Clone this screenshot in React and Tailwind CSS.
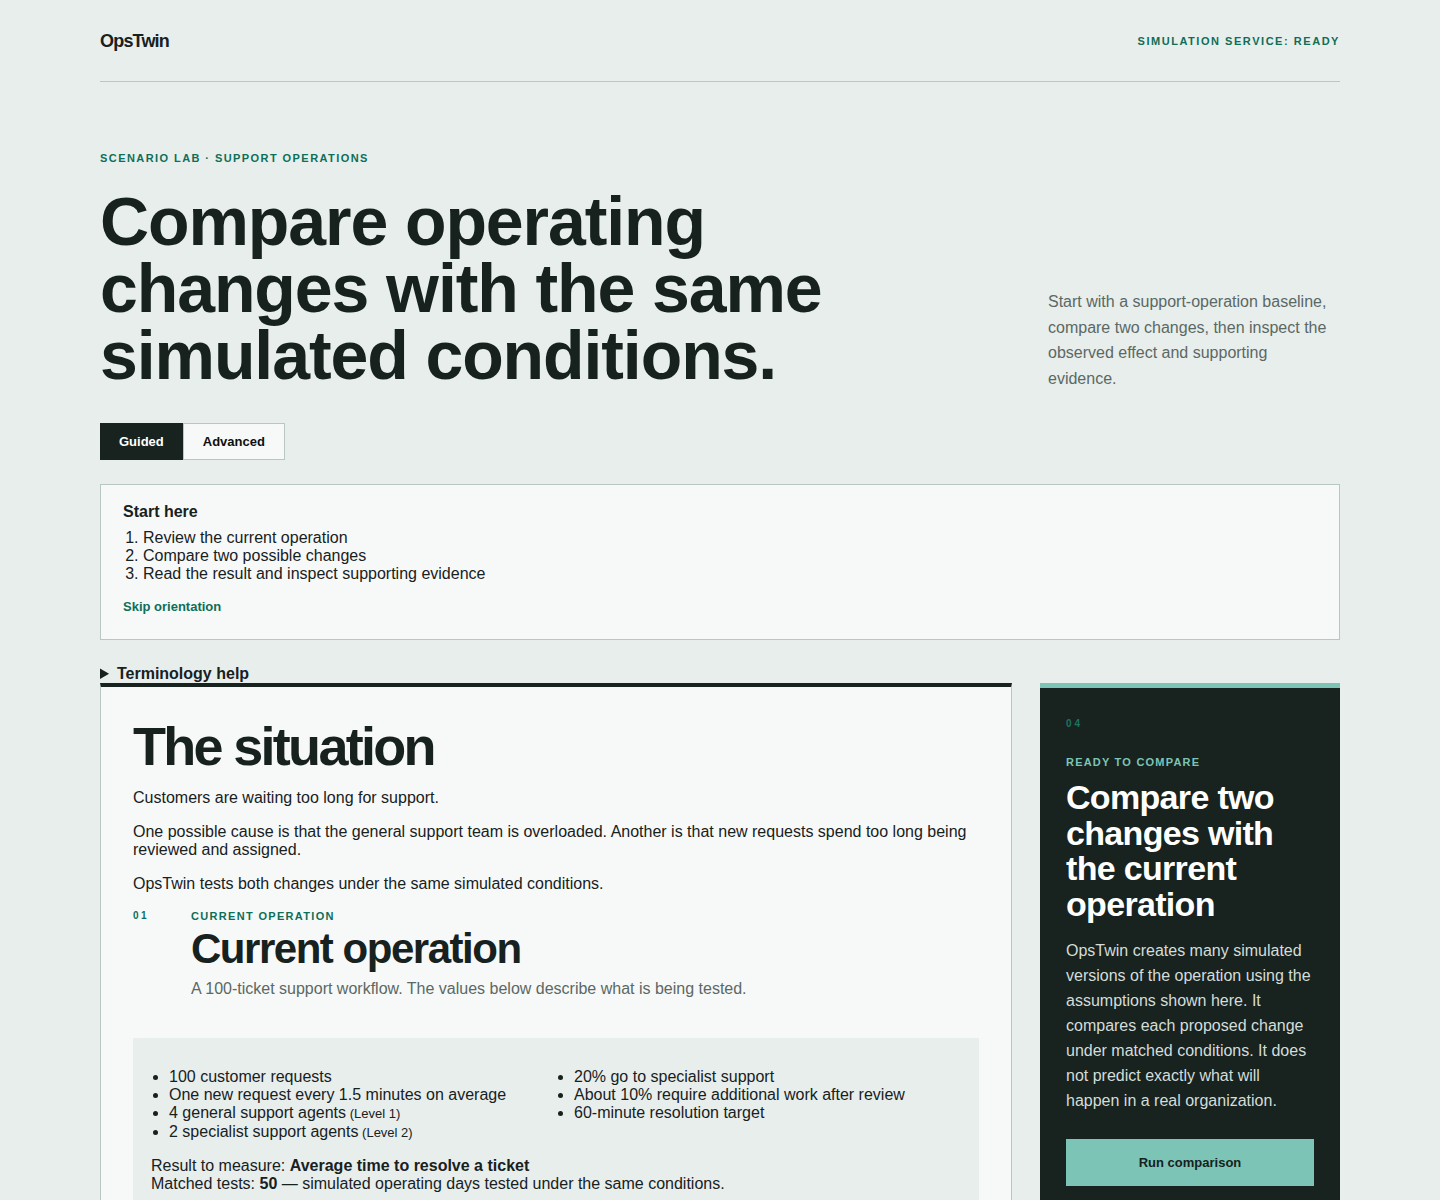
import React from "react";

const font = { fontFamily: '"Liberation Sans", Arial, sans-serif' };

const baseline = [
    { text: "100 customer requests" },
    { text: "One new request every 1.5 minutes on average" },
    { text: "4 general support agents", note: "(Level 1)" },
    { text: "2 specialist support agents", note: "(Level 2)" },
];

const routing = [
    { text: "20% go to specialist support" },
    { text: "About 10% require additional work after review" },
    { text: "60-minute resolution target" },
];

const FactList = ({ items }) => (
    <ul className="list-disc pl-[18px] text-[16px] leading-[18px] text-[#17211e]">
        {items.map((item) => (
            <li key={item.text}>
                {item.text}
                {item.note && <span className="text-[13px]"> {item.note}</span>}
            </li>
        ))}
    </ul>
);

const App = () => {
    return (
        <div className="min-h-screen bg-[#e8eeec] text-[#17211e]" style={font}>
            <div className="max-w-[1240px] mx-auto">
                {/* top bar */}
                <header className="h-[82px] pt-[2px] flex items-center justify-between border-b border-[#bcc6c3]">
                    <span className="text-[18px] font-bold tracking-[-0.045em]">OpsTwin</span>
                    <span className="text-[11px] font-bold tracking-[0.14em] text-[#0e6e58]">
                        SIMULATION SERVICE: READY
                    </span>
                </header>

                {/* hero */}
                <section className="pt-[69px]">
                    <p className="text-[11px] leading-[14px] font-bold tracking-[0.13em] text-[#0e6e58]">
                        SCENARIO LAB · SUPPORT OPERATIONS
                    </p>
                    <div className="flex items-end justify-between mt-[23px]">
                        <h1 className="text-[68px] leading-[67px] font-bold tracking-[-0.016em] max-w-[780px]">
                            Compare operating changes with the same simulated conditions.
                        </h1>
                        <p className="w-[292px] text-[16px] leading-[25.4px] text-[#5b6864] mb-[-2px]">
                            Start with a support-operation baseline, compare two changes, then inspect the
                            observed effect and supporting evidence.
                        </p>
                    </div>

                    <div className="flex mt-[34px]">
                        <button className="h-[37px] px-[18px] bg-[#18221f] border border-[#18221f] text-white text-[13px] font-bold">
                            Guided
                        </button>
                        <button className="h-[37px] px-[19px] bg-[#f7f9f8] border border-[#b8c7c2] text-[#0c0f0e] text-[13px] font-bold">
                            Advanced
                        </button>
                    </div>
                </section>

                {/* orientation */}
                <section className="mt-6 bg-[#f7f9f8] border border-[#b8c7c2] pl-[22px] pt-[18px] pb-[24px]">
                    <h2 className="text-[16px] leading-[18px] font-bold">Start here</h2>
                    <ol className="list-decimal pl-5 mt-2 text-[16px] leading-[18px]">
                        <li>Review the current operation</li>
                        <li>Compare two possible changes</li>
                        <li>Read the result and inspect supporting evidence</li>
                    </ol>
                    <a href="#" className="block mt-4 text-[13px] leading-[16px] font-bold text-[#0e6e58]">
                        Skip orientation
                    </a>
                </section>

                <details className="mt-6">
                    <summary className="text-[16px] leading-[19px] font-bold cursor-pointer">Terminology help</summary>
                </details>

                <div className="grid grid-cols-[912px_300px] gap-x-[28px]">
                    {/* situation card */}
                    <article className="bg-[#f7f9f8] border-x border-[#b8c7c2] border-t-4 border-t-[#18221f] px-8 pt-8 pb-10">
                        <h2 className="text-[54px] leading-[54px] font-bold tracking-[-0.05em]">The situation</h2>
                        <div className="mt-4 text-[16px] leading-[18px] space-y-4">
                            <p>Customers are waiting too long for support.</p>
                            <p>
                                One possible cause is that the general support team is overloaded. Another is that new
                                requests spend too long being reviewed and assigned.
                            </p>
                            <p>OpsTwin tests both changes under the same simulated conditions.</p>
                        </div>

                        <div className="grid grid-cols-[58px_1fr] mt-4">
                            <span className="text-[10px] leading-[14px] font-bold tracking-[0.25em] text-[#0e6e58]">01</span>
                            <div>
                                <p className="text-[11px] leading-[14px] font-bold tracking-[0.12em] text-[#0e6e58]">
                                    CURRENT OPERATION
                                </p>
                                <h3 className="mt-[5px] text-[42px] leading-[42px] font-bold tracking-[-0.035em]">
                                    Current operation
                                </h3>
                                <p className="mt-[10px] text-[16px] leading-[18px] text-[#5b6864]">
                                    A 100-ticket support workflow. The values below describe what is being tested.
                                </p>
                            </div>
                        </div>

                        <div className="mt-10 bg-[#e8eeec] px-[18px] pt-[30px] pb-[18px]">
                            <div className="grid grid-cols-2">
                                <FactList items={baseline} />
                                <FactList items={routing} />
                            </div>
                            <div className="mt-[15px] text-[16px] leading-[18px]">
                                <p>
                                    Result to measure: <strong>Average time to resolve a ticket</strong>
                                </p>
                                <p>
                                    Matched tests: <strong>50</strong> — simulated operating days tested under the same
                                    conditions.
                                </p>
                            </div>
                        </div>
                    </article>

                    {/* compare call-out */}
                    <aside className="self-start bg-[#18221f] border-t-[5px] border-[#7cc5b6] px-[26px] pt-[30px] pb-[30px]">
                        <p className="text-[10px] leading-[12px] font-bold tracking-[0.3em] text-[#1f7361]">04</p>
                        <p className="mt-[25px] text-[11px] leading-[14px] font-bold tracking-[0.11em] text-[#7cc5b6]">
                            READY TO COMPARE
                        </p>
                        <h2 className="mt-[11px] text-[34px] leading-[35.7px] font-bold tracking-[-0.02em] text-white">
                            Compare two changes with the current operation
                        </h2>
                        <p className="mt-[15px] text-[16px] leading-[25px] text-[#d3ddd9]">
                            OpsTwin creates many simulated versions of the operation using the assumptions shown here.
                            It compares each proposed change under matched conditions. It does not predict exactly what
                            will happen in a real organization.
                        </p>
                        <button className="mt-[26px] w-full h-[47px] bg-[#7cc5b6] text-[#17211e] text-[13px] font-bold">
                            Run comparison
                        </button>
                    </aside>
                </div>
            </div>
        </div>
    );
};

export default App;
